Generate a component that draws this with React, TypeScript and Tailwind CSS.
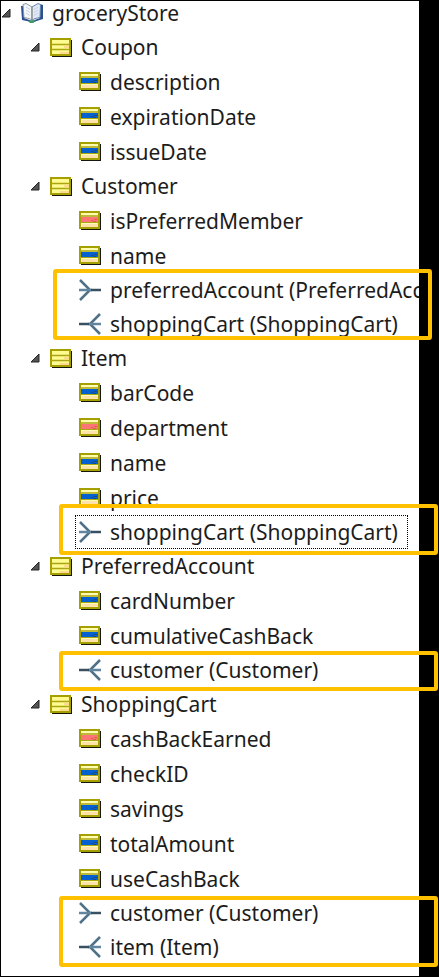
import { useState } from "react";
import { clsx } from "clsx";

type Kind = "text" | "flag" | "in" | "out";
type Leaf = { name: string; kind: Kind; focused?: boolean };
type Entity = { name: string; attributes: Leaf[]; relations: Leaf[]; frame?: string };

const entities: Entity[] = [
  {
    name: "Coupon",
    attributes: [
      { name: "description", kind: "text" },
      { name: "expirationDate", kind: "text" },
      { name: "issueDate", kind: "text" },
    ],
    relations: [],
  },
  {
    name: "Customer",
    attributes: [
      { name: "isPreferredMember", kind: "flag" },
      { name: "name", kind: "text" },
    ],
    relations: [
      { name: "preferredAccount (PreferredAccount)", kind: "in" },
      { name: "shoppingCart (ShoppingCart)", kind: "out" },
    ],
    frame: "-top-1 bottom-px left-[52px] -right-[13px]",
  },
  {
    name: "Item",
    attributes: [
      { name: "barCode", kind: "text" },
      { name: "department", kind: "flag" },
      { name: "name", kind: "text" },
      { name: "price", kind: "text" },
    ],
    relations: [{ name: "shoppingCart (ShoppingCart)", kind: "in", focused: true }],
    frame: "-top-[11px] -bottom-[6px] left-[58px] -right-[19px]",
  },
  {
    name: "PreferredAccount",
    attributes: [
      { name: "cardNumber", kind: "text" },
      { name: "cumulativeCashBack", kind: "text" },
    ],
    relations: [{ name: "customer (Customer)", kind: "out" }],
    frame: "-top-[2px] -bottom-1 left-[58px] -right-[19px]",
  },
  {
    name: "ShoppingCart",
    attributes: [
      { name: "cashBackEarned", kind: "flag" },
      { name: "checkID", kind: "text" },
      { name: "savings", kind: "text" },
      { name: "totalAmount", kind: "text" },
      { name: "useCashBack", kind: "text" },
    ],
    relations: [
      { name: "customer (Customer)", kind: "in" },
      { name: "item (Item)", kind: "out" },
    ],
    frame: "top-0 -bottom-[3px] left-[58px] -right-[19px]",
  },
];

function BookIcon() {
  return (
    <svg width="22" height="20" viewBox="0 0 22 20" className="shrink-0" aria-hidden="true">
      <path d="M0 3 H3 V15 L11 18 L19 15 V1 L22 2 V16 L14 18.500 L11 20 L8 18.500 L1 17 Z" fill="#2c4f8f" />
      <path d="M7 18 L11 17 L15 18 L12 20 H9 Z" fill="#3c9a6c" />
      <path d="M2 1.500 L5 0.500 L11 4 V17 L8 15.500 L3 14.500 Z" fill="#f5f8fb" stroke="#8b98a8" />
      <path d="M19.500 1.500 L17 0.500 L11 4 V17 L14 15.500 L19 14.500 Z" fill="#dfeaf6" stroke="#6683ad" />
      <path d="M5 4 L9 6.500 M5 7 L9 9.500 M5 10 L9 12.500 M13 6.500 L17 4 M13 9.500 L17 7 M13 12.500 L17 10" stroke="#c4d2e0" fill="none" />
      <path d="M11 4 V17" stroke="#a39680" />
    </svg>
  );
}

function EntityIcon() {
  return (
    <svg width="22" height="19" viewBox="0 0 22 19" className="shrink-0" aria-hidden="true">
      <path d="M2 2 H22 V19 H2 Z" fill="#16160c" />
      <path d="M1 1 H20 V17 H1 Z" fill="#fffb90" stroke="#a5a000" strokeWidth="2" />
      <path d="M10 14 H19 V16 H10 Z M14 8 H19 V10 H14 Z" fill="#ffd990" />
      <path d="M1 6.500 H20 M1 11.500 H20" stroke="#aaa510" strokeWidth="1.500" />
    </svg>
  );
}

function AttributeIcon({ flag }: { flag: boolean }) {
  return (
    <svg width="22" height="19" viewBox="0 0 22 19" className="shrink-0" aria-hidden="true">
      <path d="M2 2 H22 V19 H2 Z" fill="#16160c" />
      <path d="M1 1 H20 V17 H1 Z" fill="#fffdb0" stroke="#a5a000" strokeWidth="2" />
      <path d="M3 13 H19 V16 H3 Z" fill="#ffe2a8" />
      <path d="M1 5 H20" stroke="#aaa510" strokeWidth="1.500" />
      <path d="M2 6 H19 V11 H2 Z" fill={flag ? "#ff7474" : "#0560d0"} />
      <path d="M12 9.500 H14 M15 8.500 H18 M14 10.500 H17" stroke={flag ? "#d95f50" : "#174a86"} />
      <path d="M1 11.500 H20" stroke="#aaa510" />
    </svg>
  );
}

function RelationIcon({ out }: { out: boolean }) {
  return (
    <svg width="22" height="22" viewBox="0 0 22 22" className={clsx("shrink-0", out && "-scale-x-100")} aria-hidden="true">
      <path d="M1 1 L11 11 L1 21" fill="none" stroke="#4f7187" strokeWidth="2.500" />
      <path d="M0 11 H13" stroke="#6285a0" strokeWidth="2.500" />
      <path d="M12 11 H22" stroke="#38505f" strokeWidth="2.500" />
    </svg>
  );
}

function Expander({ label, open, onToggle }: { label: string; open: boolean; onToggle: () => void }) {
  return (
    <button type="button" aria-label={label} aria-expanded={open} onClick={onToggle} className="w-[10px] shrink-0">
      <svg width="10" height="10" viewBox="0 0 10 10" className={clsx("block", !open && "-rotate-45")} aria-hidden="true">
        <path d="M9 1 V9 H1 Z" fill="#555" stroke="#262626" strokeWidth="1" />
      </svg>
    </button>
  );
}

function LeafRow({ leaf }: { leaf: Leaf }) {
  const relation = leaf.kind === "in" || leaf.kind === "out";
  return (
    <li className={clsx("flex items-center overflow-hidden pl-[74px]", relation ? "h-[34px]" : "h-[35px]")}>
      <span
        className={clsx(
          "flex h-full items-center gap-[9px] border pr-[9px] pl-[3px] whitespace-nowrap",
          leaf.focused ? "border-dotted border-black" : "border-transparent",
        )}
      >
        {relation ? <RelationIcon out={leaf.kind === "out"} /> : <AttributeIcon flag={leaf.kind === "flag"} />}
        {leaf.name}
      </span>
    </li>
  );
}

function EntityNode({ entity }: { entity: Entity }) {
  const [open, setOpen] = useState(true);
  return (
    <li>
      <div className="flex h-[34px] items-center pl-[29px]">
        <Expander label={entity.name} open={open} onToggle={() => setOpen(!open)} />
        <span className="ml-[10px] flex items-center gap-[9px]">
          <EntityIcon />
          {entity.name}
        </span>
      </div>
      {open && (
        <ul>
          {entity.attributes.map((leaf) => (
            <LeafRow key={leaf.name} leaf={leaf} />
          ))}
        </ul>
      )}
      {open && entity.relations.length > 0 && (
        <div className="relative">
          <ul>
            {entity.relations.map((leaf) => (
              <LeafRow key={leaf.name} leaf={leaf} />
            ))}
          </ul>
          <div className={clsx("pointer-events-none absolute rounded-[3px] border-4 border-[#ffc000]", entity.frame)} />
        </div>
      )}
    </li>
  );
}

export default function App() {
  const [open, setOpen] = useState(true);
  return (
    <main className="flex min-h-screen flex-col overflow-x-hidden bg-black py-px pr-5 pl-px font-['Noto_Sans',sans-serif] text-[21px] leading-6 text-[#1c1c1c]">
      <div className="grow bg-white pb-3">
        <div className="flex h-[29px] items-center pb-[5px]">
          <Expander label="groceryStore" open={open} onToggle={() => setOpen(!open)} />
          <span className="ml-[10px] flex items-center gap-[9px]">
            <BookIcon />
            groceryStore
          </span>
        </div>
        {open && (
          <ul>
            {entities.map((entity) => (
              <EntityNode key={entity.name} entity={entity} />
            ))}
          </ul>
        )}
      </div>
    </main>
  );
}
